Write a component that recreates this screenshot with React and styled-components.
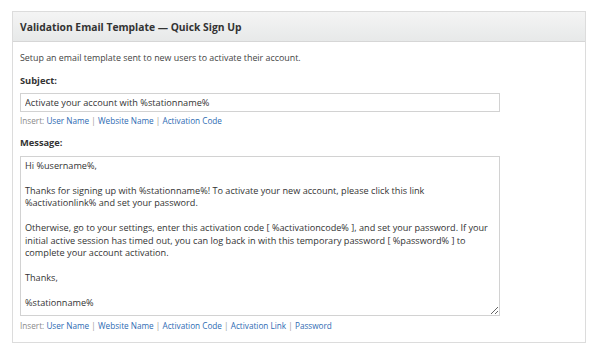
import React from 'react';
import styled, { createGlobalStyle } from 'styled-components';

const Global = createGlobalStyle`
  html, body { margin: 0; padding: 0; background: #fff; }
  body { font-family: "Open Sans", "Liberation Sans", sans-serif; color: #333; }
`;

const Page = styled.div`
  padding: 11px 13px 12px 12px;
`;

const Panel = styled.div`
  border: 1px solid #dcdcdc;
  background: #fff;
`;

const Header = styled.div`
  height: 29px;
  display: flex;
  align-items: center;
  padding: 0 7px;
  background: linear-gradient(#f4f4f4, #e7e9e9);
  border-bottom: 1px solid #d6d6d6;
  font-size: 10.3px;
  font-weight: 700;
  color: #333;
`;

const Body = styled.div`
  padding: 10px 85px 11px 7px;
`;

const Intro = styled.p`
  margin: 0 0 11px;
  font-size: 8.9px;
  line-height: 12px;
  color: #444;
`;

const Label = styled.div`
  font-size: 9.3px;
  line-height: 12px;
  font-weight: 700;
  color: #333;
  margin-bottom: ${p => p.gap}px;
`;

const Field = styled.input`
  display: block;
  box-sizing: border-box;
  width: 100%;
  height: 19px;
  margin: 0;
  padding: 0 4px;
  border: 1px solid #d2d2d2;
  font-family: inherit;
  font-size: 9.2px;
  color: #333;
  outline: none;
`;

const Area = styled.textarea`
  display: block;
  box-sizing: border-box;
  width: 100%;
  height: 160px;
  margin: 0;
  padding: 3px 4px;
  border: 1px solid #d2d2d2;
  font-family: inherit;
  font-size: 9.15px;
  line-height: 12.45px;
  color: #333;
  resize: vertical;
  overflow: hidden;
  outline: none;
`;

const Insert = styled.div`
  font-size: 8.2px;
  line-height: 11px;
  color: #8a8a8a;
  margin: ${p => p.last ? '4px 0 0' : '3px 0 11px'};
`;

const InsertLink = styled.a`
  color: #2e6bb3;
  text-decoration: none;
`;

const Sep = styled.span`
  color: #999;
`;

const message = `Hi %username%,

Thanks for signing up with %stationname%! To activate your new account, please click this link %activationlink% and set your password.

Otherwise, go to your settings, enter this activation code [ %activationcode% ], and set your password. If your initial active session has timed out, you can log back in with this temporary password [ %password% ] to complete your account activation.

Thanks,

%stationname%`;

function InsertRow({ items, last }) {
  return (
    <Insert last={last}>
      Insert:{' '}
      {items.map((it, i) => (
        <React.Fragment key={it}>
          {i > 0 && <>{' '}<Sep>|</Sep>{' '}</>}
          <InsertLink href="#">{it}</InsertLink>
        </React.Fragment>
      ))}
    </Insert>
  );
}

export default function App() {
  return (
    <>
      <Global />
      <Page>
        <Panel>
          <Header>Validation Email Template — Quick Sign Up</Header>
          <Body>
            <Intro>Setup an email template sent to new users to activate their account.</Intro>
            <Label gap={6}>Subject:</Label>
            <Field defaultValue="Activate your account with %stationname%" />
            <InsertRow items={['User Name', 'Website Name', 'Activation Code']} />
            <Label gap={7}>Message:</Label>
            <Area defaultValue={message} />
            <InsertRow last items={['User Name', 'Website Name', 'Activation Code', 'Activation Link', 'Password']} />
          </Body>
        </Panel>
      </Page>
    </>
  );
}
